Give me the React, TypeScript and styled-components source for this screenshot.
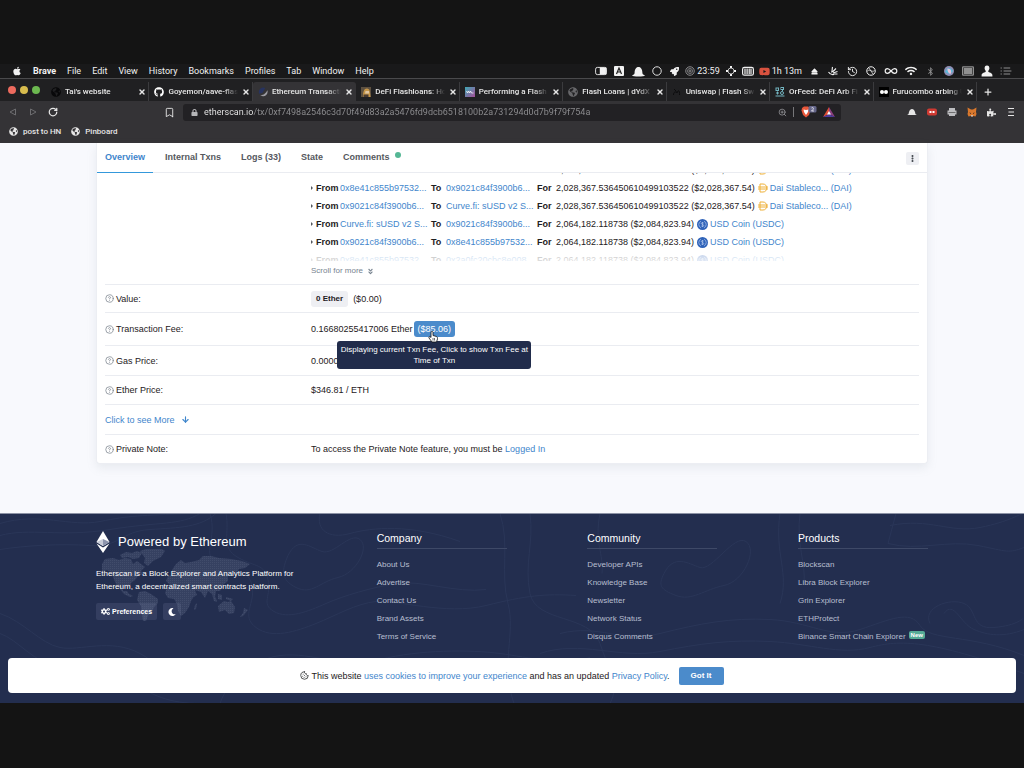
import React from "react";
import styled, { createGlobalStyle } from "styled-components";
import {
  FaApple, FaGithub, FaRocket, FaEject, FaWifi, FaBluetoothB, FaYoutube,
  FaGlobeAmericas, FaPuzzlePiece, FaCogs, FaMoon, FaEllipsisV,
  FaAngleDoubleDown, FaLock,
} from "react-icons/fa";
import {
  ArrowDown, Bookmark, CircleHelp, Cookie, History, Infinity as InfinityIcon, Plus, RotateCw, X, ZoomIn,
} from "lucide-react";

const uiFont = `Roboto, Inter, sans-serif`;
const pageFont = `"Liberation Sans", Arial, sans-serif`;
const link = "#3f86cc";

const GlobalStyle = createGlobalStyle`
  *, *::before, *::after { box-sizing: border-box; }
  body { margin: 0; background: #141414; }
  button, input { font: inherit; color: inherit; border: 0; padding: 0; background: none; }
  a { text-decoration: none; color: ${link}; }
  ul, dl, dd { margin: 0; padding: 0; list-style: none; }
  h2, h3, p { margin: 0; font-weight: 400; }
  svg { display: block; flex: none; }
`;

const Desktop = styled.div`
  padding: 64px 0;
  font-family: ${uiFont};
  font-size: 9px;
  line-height: 12px;
`;

/* ---------- system menu bar ---------- */

const MenuBar = styled.header`
  display: flex;
  align-items: center;
  justify-content: space-between;
  height: 14px;
  padding: 0 12px;
  background: #19191a;
  color: #f2f2f2;
`;
const MenuGroup = styled.nav`
  display: flex;
  align-items: center;
  gap: 11px;
`;
const MenuItem = styled.button<{ $bold?: boolean }>`
  font-weight: ${(p) => (p.$bold ? 700 : 400)};
`;
const StatusGroup = styled.div<{ $gap: number }>`
  display: flex;
  align-items: center;
  gap: ${(p) => p.$gap}px;
`;
const StatusItem = styled.span<{ $size?: number; $dim?: boolean }>`
  display: flex;
  align-items: center;
  justify-content: center;
  gap: 2px;
  min-width: ${(p) => p.$size ?? 12}px;
  white-space: nowrap;
  font-weight: 400;
  opacity: ${(p) => (p.$dim ? 0.55 : 1)};
`;

/* ---------- browser window ---------- */

const Browser = styled.div`
  border-top: 1px solid #4a4a4c;
  background: #343336;
  color: #e6e6e6;
`;
const TabStrip = styled.div`
  display: flex;
  align-items: stretch;
  height: 22px;
  background: #202022;
`;
const Lights = styled.div`
  display: flex;
  align-items: center;
  gap: 4px;
  width: 46px;
  padding-left: 8px;
`;
const Light = styled.span<{ $color: string }>`
  width: 8px;
  height: 8px;
  border-radius: 50%;
  background: ${(p) => p.$color};
`;
const Tabs = styled.div`
  display: flex;
  flex: 1;
  min-width: 0;
  padding-top: 3px;
`;
const BrowserTab = styled.div<{ $active?: boolean }>`
  display: flex;
  flex: 1;
  align-items: center;
  min-width: 0;
  gap: 4px;
  padding: 0 2px 0 5px;
  border-right: 1px solid ${(p) => (p.$active ? "transparent" : "#3b3b3e")};
  border-radius: ${(p) => (p.$active ? "3px 3px 0 0" : "0")};
  background: ${(p) => (p.$active ? "#343336" : "transparent")};
`;
const TabTitle = styled.button`
  flex: 1;
  min-width: 0;
  overflow: hidden;
  white-space: nowrap;
  text-align: left;
  font-size: 8px;
  font-weight: 500;
  mask-image: linear-gradient(to right, #000 80%, transparent);
`;
const IconButton = styled.button`
  display: flex;
  align-items: center;
  justify-content: center;
  min-width: 8px;
`;
const NewTab = styled(IconButton)`
  width: 47px;
  padding: 3px 26px 0 0;
`;
const Toolbar = styled.div`
  display: flex;
  align-items: center;
  height: 22px;
  padding: 0 8px;
`;
const NavButtons = styled.div`
  display: flex;
  align-items: center;
  gap: 10px;
  flex: 1;
  padding-right: 8px;
`;
const BookmarkButton = styled(IconButton)`
  margin-left: auto;
`;
const AddressBar = styled.div`
  display: flex;
  align-items: center;
  gap: 6px;
  flex: 0 1 658px;
  height: 17px;
  padding: 0 6px 0 8px;
  border-radius: 3px;
  background: #222124;
`;
const Address = styled.input`
  flex: 1;
  min-width: 0;
  outline: 0;
  color: #8f8f92;
  background: linear-gradient(to right, #f0f0f0 49px, #8f8f92 49px);
  background-clip: text;
  -webkit-text-fill-color: transparent;
`;
const Separator = styled.span`
  width: 1px;
  height: 10px;
  background: #77777a;
`;
const Extensions = styled.div`
  display: flex;
  flex: 1;
  align-items: center;
  justify-content: flex-end;
  gap: 10px;
  padding-left: 8px;
`;
const Bookmarks = styled.nav`
  display: flex;
  align-items: center;
  gap: 10px;
  height: 20px;
  padding: 0 9px 3px;
`;
const BookmarkLink = styled.a`
  display: flex;
  align-items: center;
  gap: 5px;
  color: #e6e6e6;
  font-size: 8px;
  font-weight: 500;
`;

/* ---------- transaction page ---------- */

const Page = styled.main`
  padding: 0 96px 49px;
  background: #f8f9fd;
  color: #1e2022;
  font-family: ${pageFont};
`;
const Card = styled.section`
  border: 1px solid #eceef3;
  border-top: 0;
  border-radius: 0 0 4px 4px;
  background: #fff;
  box-shadow: 0 4px 10px rgba(140, 152, 164, 0.15);
`;
const CardHeader = styled.div`
  display: flex;
  align-items: stretch;
  height: 30px;
  border-bottom: 1px solid #eaecf1;
`;
const PageTab = styled.button<{ $active?: boolean }>`
  display: flex;
  align-items: center;
  gap: 5px;
  margin: 0 4px -1px 0;
  padding: 0 8px 2px;
  border-bottom: 1px solid ${(p) => (p.$active ? "#3498db" : "transparent")};
  color: ${(p) => (p.$active ? link : "#55585e")};
  font-weight: 700;
`;
const Dot = styled.span`
  width: 6px;
  height: 6px;
  margin-bottom: 4px;
  border-radius: 50%;
  background: #55b795;
`;
const MoreButton = styled(IconButton)`
  align-self: center;
  width: 13px;
  height: 13px;
  margin: 2px 8px 0 auto;
  border-radius: 2px;
  background: #eeeff3;
  color: #4a4f55;
`;
const Details = styled.dl`
  padding: 0 8px;
`;
const Row = styled.div<{ $h: number }>`
  display: grid;
  grid-template-columns: 206px 1fr;
  align-items: center;
  min-height: ${(p) => p.$h}px;
  border-bottom: 1px solid #eaecf1;
  &:last-child { border-bottom: 0; }
`;
const Label = styled.dt`
  display: flex;
  align-items: center;
  gap: 2px;
  svg { color: #7c848d; }
`;
const Value = styled.dd`
  display: flex;
  align-items: center;
  min-width: 0;
  white-space: nowrap;
`;
const TransferBlock = styled.dd`
  grid-column: 2;
  padding-bottom: 7px;
`;
const TransferWindow = styled.div`
  position: relative;
  height: 88px;
  overflow: hidden;
  &::after {
    content: "";
    position: absolute;
    inset: auto 0 0;
    height: 9px;
    background: linear-gradient(rgba(255, 255, 255, 0.7), rgba(255, 255, 255, 0.85));
  }
`;
const TransferList = styled.ul`
  margin-top: -12px;
`;
const Transfer = styled.li`
  display: grid;
  grid-template-columns: 5px 24px 91px 15px 91px 19px auto;
  justify-content: start;
  align-items: center;
  height: 18px;
  white-space: nowrap;
`;
const Caret = styled.span`
  width: 0;
  border: 2px solid transparent;
  border-left-color: #55585e;
  border-right: 0;
`;
const Amount = styled.span`
  display: flex;
  align-items: center;
  gap: 3px;
`;
const Token = styled.a`
  display: flex;
  align-items: center;
  gap: 2px;
`;
const ScrollMore = styled.button`
  display: flex;
  align-items: center;
  gap: 4px;
  margin-top: 4px;
  color: #77838f;
  font-size: 8px;
`;
const Chip = styled.span`
  margin-right: 5px;
  padding: 2px 5px;
  border-radius: 3px;
  background: #eeeff3;
  font-size: 8px;
  font-weight: 700;
`;
const FeeAnchor = styled.span`
  position: relative;
  margin-left: 1px;
`;
const FeeButton = styled.button`
  height: 16px;
  padding: 0 4px;
  border-radius: 3px;
  background: #4b8bcb;
  color: #fff;
`;
const Tooltip = styled.span`
  position: absolute;
  z-index: 2;
  top: 20px;
  left: 50%;
  width: 194px;
  padding: 3px 2px;
  transform: translateX(-50%);
  border-radius: 3px;
  background: #212c4b;
  color: #fff;
  font-size: 8px;
  line-height: 11px;
  text-align: center;
  white-space: normal;
`;
const Pointer = styled.svg`
  position: absolute;
  z-index: 3;
  top: 10px;
  left: 14px;
`;
const SeeMore = styled.a`
  display: flex;
  align-items: center;
  gap: 6px;
`;

/* ---------- page footer ---------- */

const Footer = styled.footer`
  position: relative;
  min-height: 190px;
  padding: 17px 96px 50px;
  overflow: hidden;
  border-top: 1px solid #8c92a5;
  background: #232e4f;
  color: #fff;
  font-family: ${pageFont};
`;
const Contours = styled.svg`
  position: absolute;
  inset: 0;
  width: 100%;
  height: 100%;
  fill: none;
  stroke: #2a3658;
`;
const FooterGrid = styled.div`
  position: relative;
  display: grid;
  grid-template-columns: 200px repeat(3, 130px);
  justify-content: space-between;
`;
const Brand = styled.div`
  position: relative;
`;
const WorldMap = styled.svg`
  position: absolute;
  top: 17px;
  left: 0;
`;
const BrandTitle = styled.h2`
  position: relative;
  display: flex;
  align-items: center;
  gap: 8px;
  font-size: 13px;
  line-height: 20px;
`;
const BrandText = styled.p`
  position: relative;
  margin-top: 14px;
  font-size: 8px;
  line-height: 13px;
  white-space: nowrap;
`;
const BrandActions = styled.div`
  position: relative;
  display: flex;
  gap: 6px;
  margin-top: 10px;
`;
const FooterButton = styled.button`
  display: flex;
  align-items: center;
  gap: 2px;
  height: 17px;
  padding: 0 5px;
  border-radius: 2px;
  background: rgba(119, 131, 165, 0.2);
  font-size: 7px;
  font-weight: 700;
`;
const ColumnTitle = styled.h3`
  padding: 1px 0 4px;
  margin-bottom: 7px;
  border-bottom: 1px solid #3e4967;
`;
const FooterLinks = styled.ul`
  display: grid;
  grid-auto-rows: 18px;
`;
const FooterItem = styled.li`
  display: flex;
  align-items: center;
  gap: 3px;
  white-space: nowrap;
  font-size: 8px;
`;
const FooterLink = styled.a`
  color: #b8bfd0;
`;
const NewBadge = styled.span`
  margin-bottom: 4px;
  padding: 0 2px;
  border-radius: 2px;
  background: #55ab97;
  font-size: 6px;
  line-height: 8px;
  font-weight: 700;
`;
const CookieBar = styled.div`
  position: absolute;
  inset: auto 8px 10px;
  display: flex;
  align-items: center;
  justify-content: center;
  min-height: 35px;
  border-radius: 4px;
  background: #fff;
  color: #1e2022;
`;
const CookieText = styled.p`
  margin: 0 9px 0 2px;
`;
const Accept = styled.button`
  width: 45px;
  height: 18px;
  border-radius: 2px;
  background: #4b8bcb;
  color: #fff;
  font-size: 8px;
  font-weight: 700;
`;

/* ---------- drawings ---------- */

const Svg = ({ size = 10, children }: { size?: number; children: React.ReactNode }) => (
  <svg width={size} height={size} viewBox="0 0 20 20" fill="none" stroke="currentColor" strokeWidth="2" aria-hidden="true">
    {children}
  </svg>
);

type Status = { id: string; size?: number; dim?: boolean; node: React.ReactNode };

const shortcuts: Status[] = [
  { id: "toggle", size: 12, node: <Svg size={12}><rect x="1" y="4" width="18" height="12" rx="3" strokeWidth="1.500" /><path d="M9 5h9v10H9z" fill="currentColor" /></Svg> },
  { id: "input", size: 10, node: <Svg><rect x="0" y="0" width="20" height="20" rx="2" fill="currentColor" stroke="none" /><path d="M5 16 10 4l5 12M7 12h6" stroke="#222" strokeWidth="2.400" /></Svg> },
  { id: "bowler", size: 14, node: <Svg size={13}><path d="M0 16c2-1 4-1 4-4C4 0 16 0 16 12c0 3 2 3 4 4-1 2-19 2-20 0z" fill="currentColor" stroke="none" /></Svg> },
  { id: "ring", size: 10, node: <Svg><circle cx="10" cy="10" r="8.500" strokeWidth="1.800" /></Svg> },
  { id: "rocket", size: 10, node: <FaRocket size={9} /> },
];

const monitors: Status[] = [
  { id: "clock", node: <><Svg><circle cx="10" cy="10" r="8.500" stroke="#8a8a8c" /><circle cx="10" cy="10" r="5" stroke="#77777a" /><circle cx="10" cy="10" r="2" stroke="#8a8a8c" /></Svg>23:59</> },
  { id: "target", size: 12, node: <Svg><circle cx="10" cy="10" r="6" strokeWidth="1.500" /><path d="M10 0v4M10 16v4M0 10h4M16 10h4" strokeWidth="4" /></Svg> },
  { id: "memory", size: 12, node: <Svg size={12}><rect x="1" y="4" width="18" height="13" rx="3" /><path d="M5 6v9M8.500 6v9M12 6v9M15 6v9" /></Svg> },
  { id: "timer", node: <><FaYoutube size={11} color="#d9523f" />1h 13m</> },
];

const system: Status[] = [
  { id: "eject", node: <FaEject size={7} /> },
  { id: "hand", node: <Svg><path d="M9 2c-1 4 0 8-2 11M9 12l7-7M10 14l9-3M11 16h8M1 12c3 5 6 6 11 5" strokeWidth="2.200" /></Svg> },
  { id: "backup", node: <History size={11} /> },
  { id: "sync", node: <Svg><circle cx="10" cy="10" r="8.500" /><path d="M3 10c5-5 9 4 14-1M6 4l8 12" strokeWidth="1.500" /></Svg> },
  { id: "infinity", node: <InfinityIcon size={14} strokeWidth={2} /> },
  { id: "wifi", node: <FaWifi size={12} /> },
  { id: "bluetooth", dim: true, node: <FaBluetoothB size={9} /> },
  { id: "siri", node: <svg width="10" height="10" viewBox="0 0 20 20"><circle cx="10" cy="10" r="10" fill="#8e8fb5" /><path d="M2 11c5-9 11-9 16-1-5 7-11 7-16 1z" fill="#5bb8d8" /><path d="M7 5c7 0 9 6 6 11-4-1-7-6-6-11z" fill="#e8c6d8" /></svg> },
  { id: "display", dim: true, node: <Svg size={12}><rect x="1" y="3" width="18" height="14" rx="1" /><path d="M4 6h12v8H4z" fill="currentColor" /></Svg> },
  { id: "user", node: <Svg size={12}><path d="M10 1c3 0 4 2 4 5 0 2-2 3-2 5 1 2 7 2 7 6v2H1v-2c0-4 6-4 7-6 0-2-2-3-2-5 0-3 1-5 4-5z" fill="currentColor" stroke="none" /></Svg> },
  { id: "list", dim: true, node: <Svg size={12}><path d="M1 5h2M1 10h2M1 15h2M6 5h11M6 10h13M6 15h11" strokeWidth="1.800" /></Svg> },
];

const tabs: { title: string; active?: boolean; icon: React.ReactNode }[] = [
  { title: "Tai's website", icon: <FaGlobeAmericas size={10} color="#08080a" /> },
  { title: "Goyemon/aave-flas", icon: <FaGithub size={10} color="#fff" /> },
  { title: "Ethereum Transacti", active: true, icon: <svg width="10" height="10" viewBox="0 0 18 18"><path d="M2 12A8 8 0 0 1 13 2L8 11z" fill="#27335f" /><path d="M4 15c7 0 10-4 13-9 2 8-6 14-13 9z" fill="#9b9ba2" /></svg> },
  { title: "DeFi Flashloans: Ho", icon: <svg width="10" height="10" viewBox="0 0 20 20"><path d="M0 0h20v20H0z" fill="#5d5040" /><path d="M4 20C4 9 6 3 12 3s6 7 7 17z" fill="#c79749" /><path d="M9 8h7v5H8z" fill="#dfc6a4" /><path d="M5 15h10v5H5z" fill="#473a33" /></svg> },
  { title: "Performing a Flash L", icon: <svg width="10" height="10" viewBox="0 0 20 20"><defs><linearGradient id="aave" x2="1" y2="1"><stop stopColor="#3ea9b5" /><stop offset="1" stopColor="#a64d98" /></linearGradient></defs><path d="M0 0h20v20H0z" fill="url(#aave)" /><path d="m3 8 2 4 2-4 2 4 2-4 2 4h4" fill="none" stroke="#fff" strokeWidth="1.500" /></svg> },
  { title: "Flash Loans | dYdX", icon: <FaGlobeAmericas size={10} color="#67676a" /> },
  { title: "Uniswap | Flash Sw", icon: <Svg><path d="M3 16c0-6 4-8 7-4 3-9 6-3 5 4M4 4l5 5" stroke="#0c0c0d" /></Svg> },
  { title: "OrFeed: DeFi Arb Fi", icon: <Svg><g stroke="#72b4c0"><rect x="2" y="2" width="5" height="5" /><rect x="12" y="1" width="5" height="4" /><circle cx="14" cy="12" r="3" /><path d="M5 9v6M2 12h6M15 5v3M1 18h18" /></g></Svg> },
  { title: "Furucombo arbing U", icon: <svg width="10" height="10" viewBox="0 0 20 20"><path d="M0 0h20v20H0z" fill="#000" /><circle cx="6" cy="10" r="4" fill="#fff" /><circle cx="14" cy="10" r="4" fill="#fff" /></svg> },
];

const DaiIcon = () => (
  <svg width="10" height="10" viewBox="0 0 20 20" fill="none" stroke="#eeb037" strokeWidth="2" aria-hidden="true">
    <path d="M4 2h6c10 0 10 16 0 16H4zM0 8h20M0 12h20" />
  </svg>
);
const UsdcIcon = () => (
  <svg width="11" height="11" viewBox="0 0 22 22" fill="none" stroke="#b9cdf0" aria-hidden="true">
    <circle cx="11" cy="11" r="11" fill="#2f63b9" stroke="none" />
    <path d="M8 4.500a7 7 0 0 0 0 13M14 4.500a7 7 0 0 1 0 13" strokeWidth="1.300" />
    <path d="M13.500 8.500c-1-2-5-1.500-5 .5s5 1.500 5 4-4 2.500-5 .5M11 6v10" strokeWidth="1.300" />
  </svg>
);
const EtherIcon = () => (
  <svg width="14" height="22" viewBox="0 0 28 44" aria-hidden="true">
    <path d="M14 0 1 22l13 8 13-8z" fill="#fff" />
    <path d="m14 16-13 6 13 8z" fill="#c8ccd8" />
    <path d="m14 16 13 6-13 8z" fill="#8d95ad" />
    <path d="m1 25 13 8 13-8-13 19z" fill="#fff" />
  </svg>
);

const dai = "2,028,367.536450610499103522 ($2,028,367.54)";
const usdc = "2,064,182.118738 ($2,084,823.94)";
const transfers = [
  { from: "0x9021c84f3900b6...", to: "0x8e41c855b97532...", amount: dai, token: "dai" },
  { from: "0x8e41c855b97532...", to: "0x9021c84f3900b6...", amount: dai, token: "dai" },
  { from: "0x9021c84f3900b6...", to: "Curve.fi: sUSD v2 S...", amount: dai, token: "dai" },
  { from: "Curve.fi: sUSD v2 S...", to: "0x9021c84f3900b6...", amount: usdc, token: "usdc" },
  { from: "0x9021c84f3900b6...", to: "0x8e41c855b97532...", amount: usdc, token: "usdc" },
  { from: "0x8e41c855b97532...", to: "0x2a0fc20cbc8e008...", amount: usdc, token: "usdc" },
];

const columns = [
  { title: "Company", links: ["About Us", "Advertise", "Contact Us", "Brand Assets", "Terms of Service"] },
  { title: "Community", links: ["Developer APIs", "Knowledge Base", "Newsletter", "Network Status", "Disqus Comments"] },
  { title: "Products", links: ["Blockscan", "Libra Block Explorer", "Grin Explorer", "ETHProtect", "Binance Smart Chain Explorer"] },
];

const Term = ({ children }: { children: React.ReactNode }) => (
  <Label><CircleHelp size={9} strokeWidth={2} />{children}</Label>
);

const StatusIcons = ({ items, gap }: { items: Status[]; gap: number }) => (
  <StatusGroup $gap={gap}>
    {items.map((s) => (
      <StatusItem key={s.id} $size={s.size} $dim={s.dim}>{s.node}</StatusItem>
    ))}
  </StatusGroup>
);

export default function App() {
  return (
    <>
      <GlobalStyle />
      <Desktop>
        <MenuBar>
          <MenuGroup>
            <FaApple size={10} />
            {["Brave", "File", "Edit", "View", "History", "Bookmarks", "Profiles", "Tab", "Window", "Help"].map((m, i) => (
              <MenuItem key={m} $bold={i === 0}>{m}</MenuItem>
            ))}
          </MenuGroup>
          <StatusGroup $gap={6}>
            <StatusIcons items={shortcuts} gap={7} />
            <StatusIcons items={monitors} gap={5} />
            <StatusIcons items={system} gap={7} />
          </StatusGroup>
        </MenuBar>

        <Browser>
          <TabStrip>
            <Lights>
              <Light $color="#ec6a5e" />
              <Light $color="#d8bc4e" />
              <Light $color="#6cb850" />
            </Lights>
            <Tabs>
              {tabs.map((t) => (
                <BrowserTab key={t.title} $active={t.active}>
                  {t.icon}
                  <TabTitle>{t.title}</TabTitle>
                  <IconButton aria-label="Close tab"><X size={8} strokeWidth={4} /></IconButton>
                </BrowserTab>
              ))}
            </Tabs>
            <NewTab aria-label="New tab"><Plus size={10} strokeWidth={3} /></NewTab>
          </TabStrip>
          <Toolbar>
            <NavButtons>
              <IconButton aria-label="Back"><Svg><path d="M15 4v12L4 10z" stroke="#6d6d70" /></Svg></IconButton>
              <IconButton aria-label="Forward"><Svg><path d="M5 4v12l11-6z" stroke="#6d6d70" /></Svg></IconButton>
              <IconButton aria-label="Reload"><RotateCw size={10} strokeWidth={3} /></IconButton>
              <BookmarkButton aria-label="Bookmark this page"><Bookmark size={11} strokeWidth={2} /></BookmarkButton>
            </NavButtons>
            <AddressBar>
              <FaLock size={7} color="#b5b5b8" />
              <Address
                aria-label="Address"
                defaultValue="etherscan.io/tx/0xf7498a2546c3d70f49d83a2a5476fd9dcb6518100b2a731294d0d7b9f79f754a"
              />
              <ZoomIn size={9} color="#9a9a9d" />
              <Separator />
              <svg width="17" height="12" viewBox="0 0 34 24" aria-hidden="true">
                <path d="m4 4 4-3h8l4 3 1 5-3 9-6 5-6-5L3 9z" fill="#e8573a" />
                <path d="m7 7 5 1 5-1-1 5-4 6-4-6z" fill="#fff" />
                <rect x="17" y="0" width="16" height="13" rx="3" fill="#65668a" />
                <path d="M23 4c3-2 5 0 3 3l-3 3h5" fill="none" stroke="#fff" strokeWidth="1.500" />
              </svg>
              <svg width="12" height="10" viewBox="0 0 24 20" aria-hidden="true">
                <path d="M12 0 0 20l12-6z" fill="#dd4c35" />
                <path d="m12 0 12 20-12-6z" fill="#8b3f7e" />
                <path d="m0 20 12-6 12 6z" fill="#4f3b9b" />
                <path d="m12 8 4 7H8z" fill="#fff" />
              </svg>
            </AddressBar>
            <Extensions>
              <IconButton aria-label="Hat"><Svg><path d="M0 16c4-1 3-3 4-6 2-8 10-8 12 0 1 3 0 5 4 6z" fill="currentColor" stroke="none" /></Svg></IconButton>
              <IconButton aria-label="Video"><Svg><rect x="0" y="3" width="20" height="14" rx="4" fill="#cf3a32" stroke="none" /><path d="M5 10h4M11 10h4" stroke="#fff" strokeWidth="4" /></Svg></IconButton>
              <IconButton aria-label="Print"><Svg><path d="M4 2h12v5h3v8h-3v3H4v-3H1V7h3z" fill="#bdbdc0" stroke="none" /><path d="M3 11h14" stroke="#555" strokeWidth="1.500" /></Svg></IconButton>
              <IconButton aria-label="Wallet"><Svg><path d="m1 1 7 4h4l7-4-1 9 1 4-2 5-4-1-2 1H9l-2-1-4 1-2-5 1-4z" fill="#d9782d" stroke="none" /><path d="m4 11 4 1v2zM16 11l-4 1v2z" fill="#33251e" stroke="none" /><path d="M8 16h4v3H8z" fill="#c9b8ab" stroke="none" /></Svg></IconButton>
              <IconButton aria-label="Extensions"><FaPuzzlePiece size={9} /></IconButton>
              <IconButton aria-label="Menu"><Svg><path d="M4 3h12M5 10h11M4 17h12" /></Svg></IconButton>
            </Extensions>
          </Toolbar>
          <Bookmarks>
            <BookmarkLink href="#hn"><FaGlobeAmericas size={9} />post to HN</BookmarkLink>
            <BookmarkLink href="#pinboard"><FaGlobeAmericas size={9} />Pinboard</BookmarkLink>
          </Bookmarks>
        </Browser>

        <Page>
          <Card>
            <CardHeader>
              <PageTab $active>Overview</PageTab>
              <PageTab>Internal Txns</PageTab>
              <PageTab>Logs (33)</PageTab>
              <PageTab>State</PageTab>
              <PageTab>Comments<Dot /></PageTab>
              <MoreButton aria-label="More options"><FaEllipsisV size={7} /></MoreButton>
            </CardHeader>
            <Details>
              <Row $h={112}>
                <TransferBlock>
                  <TransferWindow>
                    <TransferList>
                      {transfers.map((t, i) => (
                        <Transfer key={i}>
                          <Caret />
                          <b>From</b>
                          <a href="#from">{t.from}</a>
                          <b>To</b>
                          <a href="#to">{t.to}</a>
                          <b>For</b>
                          <Amount>
                            {t.amount}
                            <Token href="#token">
                              {t.token === "dai" ? <DaiIcon /> : <UsdcIcon />}
                              {t.token === "dai" ? "Dai Stableco... (DAI)" : "USD Coin (USDC)"}
                            </Token>
                          </Amount>
                        </Transfer>
                      ))}
                    </TransferList>
                  </TransferWindow>
                  <ScrollMore>Scroll for more <FaAngleDoubleDown size={7} /></ScrollMore>
                </TransferBlock>
              </Row>
              <Row $h={28}>
                <Term>Value:</Term>
                <Value><Chip>0 Ether</Chip>($0.00)</Value>
              </Row>
              <Row $h={33}>
                <Term>Transaction Fee:</Term>
                <Value>
                  0.16680255417006 Ether
                  <FeeAnchor>
                    <FeeButton aria-describedby="fee-tip">($85.06)</FeeButton>
                    <Tooltip id="fee-tip" role="tooltip">
                      Displaying current Txn Fee, Click to show Txn Fee at Time of Txn
                    </Tooltip>
                    <Pointer width="10" height="12" viewBox="0 0 20 24" aria-hidden="true">
                      <path d="M6 13V3c0-3 4-3 4 0v6l7 2c2 1 2 3 2 5l-2 6H8l-6-8c-1-2 1-4 4-1z" fill="#fff" stroke="#111" strokeWidth="1.600" />
                      <path d="M10 14v5M13 14v5" stroke="#111" strokeWidth="1.200" />
                    </Pointer>
                  </FeeAnchor>
                </Value>
              </Row>
              <Row $h={30}>
                <Term>Gas Price:</Term>
                <Value>0.0000</Value>
              </Row>
              <Row $h={29}>
                <Term>Ether Price:</Term>
                <Value>$346.81 / ETH</Value>
              </Row>
              <Row $h={30}>
                <dt><SeeMore href="#more">Click to see More <ArrowDown size={9} strokeWidth={3} /></SeeMore></dt>
              </Row>
              <Row $h={28}>
                <Term>Private Note:</Term>
                <Value>To access the Private Note feature, you must be&nbsp;<a href="#login">Logged In</a></Value>
              </Row>
            </Details>
          </Card>
        </Page>

        <Footer>
          <Contours viewBox="0 0 1024 190" preserveAspectRatio="xMidYMid slice" aria-hidden="true">
            <path d="M0 10c40-12 70 4 100-2s40-6 90-8M0 22c30-8 60 2 110-6s70-4 90-16M0 36c26-4 60-6 90-4s30-14 60-16 50-2 66-16" />
            <path d="M210 0c8 26-10 40 8 52s30 2 34 20-12 30 4 42 40 4 60-4 40-20 60-22 70 14 110 4 60-12 90-10" />
            <path d="M226 0c4 20-6 34 12 44s26 6 30 22-8 24 6 32 34 0 52-8 46-16 70-20 60 10 90 6" />
            <path d="M288 42c10-20 22-8 34-4s28-20 38-12-4 34-22 38-26 18-42 10-14-18-8-32zM664 60c10-20 24-10 36-6s34-34 46-26-2 40-22 44-32 16-48 10-18-10-12-22z" />
            <path d="M0 100c24 8 40 30 60 34s50-10 80 6 20 34 60 36 46-30 80-34 60 14 100 4 90-10 120-6 60 12 90 4" />
            <path d="M0 120c18 6 34 30 60 34s50-4 70 12 40 24 70 24M220 190c10-30 40-40 70-42s60 10 90 6 100-12 140-8" />
            <path d="M500 0c10 30 0 60 8 90s-8 60 6 100M530 0c4 30-6 50 0 80s60 20 70 50 20 40 10 60M600 0c-6 30 4 40 2 60" />
            <path d="M560 120c40-10 60 10 100 0s70-16 110-14 60 20 90 10 50-20 60-4 50 8 104 30" />
            <path d="M540 140c40-14 80 6 120-2s70-12 110-10 70 14 100 6 60-8 154 26M600 170c30-20 60-8 100-12s80-6 120 0" />
            <path d="M780 0c-6 40 10 60 0 90M800 0c-4 30 6 50 4 70M890 12c40-8 60 8 90 2s40-14 44-14M896 0l-8 30c30 8 60-4 90 2s30 8 46 2" />
            <path d="M930 110c-8-16 20-26 34-20s6 26 30 24 30-10 30-10M944 100c10-14 16 10 30 16s30 8 50 0M320 0c-4 16 8 26 30 20s60-10 110 8" />
          </Contours>
          <FooterGrid>
            <Brand>
              <WorldMap width="156" height="74" viewBox="0 0 156 74" aria-hidden="true">
                <defs>
                  <pattern id="dots" width="2" height="2" patternUnits="userSpaceOnUse">
                    <path d="M0 0h2v2H0z" fill="#364161" />
                    <path d="M0 0h1v1H0z" fill="#414c6b" />
                  </pattern>
                </defs>
                <g fill="url(#dots)">
                  <path d="M6 16l3-5 8-1 6 2 6-2 6 1 2 5 4-3 4 3 4 3-4 4 2 3-5 2-3 4-4 3-1 4-4-1-4 1 1 4 4 0 2 3 4 2-3 1-6-3-4-5-4-5-3-7-2-5-4-2-5 2z" />
                  <path d="M24 7l6-3 6 1 5-2 5 2-3 5-6 1-5-2-6 1zM44 3l6-2h16l3 2-4 6-8 4-5 5-4-3 1-5z" />
                  <path d="M43 44l6-1 6 3 7 5 0 4-4 4-2 5-4 3-2 6-3 0-1-8-1-7-4-6z" />
                  <path d="M71 40l6-3 8 2 6 1 3 6 4 2-3 5-2 6-4 6-4 3-3-5-1-7-3-5-6-1-3-5z" />
                  <path d="M70 33l2-5 5-2-1-4 4-6 5-4 4 3 6-1 8-2 4-4 8 0 8 2 12 1 11 2 8 3-5 4-6 1-3 5-3-3-5 5 0 5-5 4-3 6-4 0-1 6-3-3-4-3-3 7-4-6-6-2 2 5-5 3-5-7-5-2-2-3-5 1-5-2z" />
                  <path d="M116 46l4 4 1 4-3-1zM122 46l4 1 0 5-4-1zM130 49l7 2-2 2-5-2zM122 58l6-5 4 1 3-1 4 6-1 6-5 1-4-4-6 2zM148 60l4 2-5 6-3 1 3-4zM99 57l2-2-1 6-2 1z" />
                </g>
              </WorldMap>
              <BrandTitle><EtherIcon />Powered by Ethereum</BrandTitle>
              <BrandText>
                Etherscan is a Block Explorer and Analytics Platform for<br />
                Ethereum, a decentralized smart contracts platform.
              </BrandText>
              <BrandActions>
                <FooterButton><FaCogs size={9} />Preferences</FooterButton>
                <FooterButton aria-label="Night mode"><FaMoon size={8} /></FooterButton>
              </BrandActions>
            </Brand>
            {columns.map((c) => (
              <div key={c.title}>
                <ColumnTitle>{c.title}</ColumnTitle>
                <FooterLinks>
                  {c.links.map((l) => (
                    <FooterItem key={l}>
                      <FooterLink href="#footer">{l}</FooterLink>
                      {l.startsWith("Binance") && <NewBadge>New</NewBadge>}
                    </FooterItem>
                  ))}
                </FooterLinks>
              </div>
            ))}
          </FooterGrid>
          <CookieBar>
            <Cookie size={9} />
            <CookieText>
              This website <a href="#cookies">uses cookies to improve your experience</a> and has an updated{" "}
              <a href="#privacy">Privacy Policy</a>.
            </CookieText>
            <Accept>Got It</Accept>
          </CookieBar>
        </Footer>
      </Desktop>
    </>
  );
}
